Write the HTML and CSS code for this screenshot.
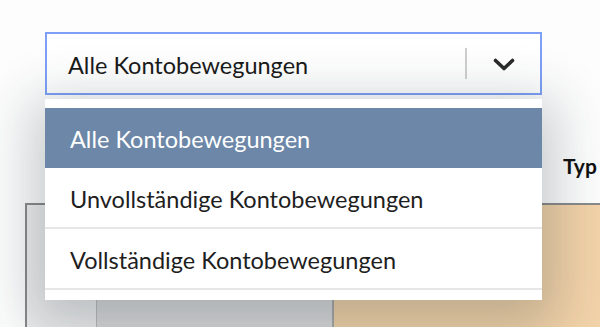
FILE: index.html
```html
<!DOCTYPE html>
<html lang="de">
<head>
<meta charset="utf-8">
<link rel="stylesheet" href="styles.css">
</head>
<body>
<div class="page">
  <div class="select">
    <span class="select-value">Alle Kontobewegungen</span>
    <span class="select-sep"></span>
    <span class="select-arrow">
      <svg width="22" height="14" viewBox="0 0 22 14"><path d="M2.5 2.5 L11 10.5 L19.5 2.5" fill="none" stroke="#2b2b2b" stroke-width="3.6" stroke-linecap="round" stroke-linejoin="round"/></svg>
    </span>
  </div>

  <div class="table">
    <div class="thead">
      <div class="th th1"></div>
      <div class="th th2"></div>
      <div class="th th3">Typ</div>
    </div>
    <div class="tbody">
      <div class="td td1"></div>
      <div class="td td2"></div>
      <div class="td td3"></div>
    </div>
  </div>

  <ul class="menu">
    <li class="option selected">Alle Kontobewegungen</li>
    <li class="option">Unvollständige Kontobewegungen</li>
    <li class="option">Vollständige Kontobewegungen</li>
  </ul>
</div>
</body>
</html>
```

FILE: styles.css
```css
* { box-sizing: border-box; }
html, body { margin: 0; padding: 0; }
body {
  background: #ffffff;
  font-family: "Lato", "Noto Sans", sans-serif;
  color: #1c1c1c;
  overflow: hidden;
}
.page {
  position: relative;
  width: 600px;
  height: 327px;
  padding-top: 32px;
  background: #fdfdfd;
}
.select {
  margin-left: 45px;
  width: 497px;
  height: 63px;
  border: 2px solid #7d9ff8;
  background: #ffffff;
  display: flex;
  align-items: center;
  padding-left: 21px;
  position: relative;
  z-index: 2;
}
.select-value {
  flex: 1;
  font-size: 23.5px;
  color: #1a1a1a;
  padding-top: 2px;
}
.select-sep {
  width: 2px;
  height: 31px;
  background: #cfcfcf;
}
.select-arrow {
  width: 73px;
  display: flex;
  justify-content: center;
  align-items: center;
  padding-top: 2px;
}
.table {
  margin-left: 25px;
  margin-top: 42px;
}
.thead {
  display: flex;
  height: 66px;
}
.th3 {
  margin-left: auto;
  width: 37px;
  font-weight: 700;
  font-size: 21px;
  color: #111;
  padding-top: 16px;
  white-space: nowrap;
  overflow: hidden;
}
.tbody {
  display: flex;
  height: 130px;
  border-top: 2px solid #8a8a8a;
  border-left: 2px solid #8a8a8a;
}
.td1 { width: 70px; background: #eeeeee; border-right: 1px solid #bbb; }
.td2 { width: 237px; background: #dadada; border-right: 2px solid #a8a8a8; }
.td3 { flex: 1; background: #f3d3a9; }
.menu {
  position: absolute;
  left: 45px;
  top: 99px;
  width: 497px;
  margin: 0;
  padding: 9px 0 10px;
  list-style: none;
  background: #ffffff;
  box-shadow: 0 14px 50px 14px rgba(30, 45, 55, 0.24);
  z-index: 3;
}
.option {
  height: 61px;
  display: flex;
  align-items: center;
  padding-left: 25px;
  padding-top: 2px;
  font-size: 23.5px;
  color: #1e1e1e;
  border-bottom: 2px solid #e6e6e6;
}
.option.selected {
  background: #6c87a7;
  color: #ffffff;
  border-bottom: none;
  height: 60px;
}
```
